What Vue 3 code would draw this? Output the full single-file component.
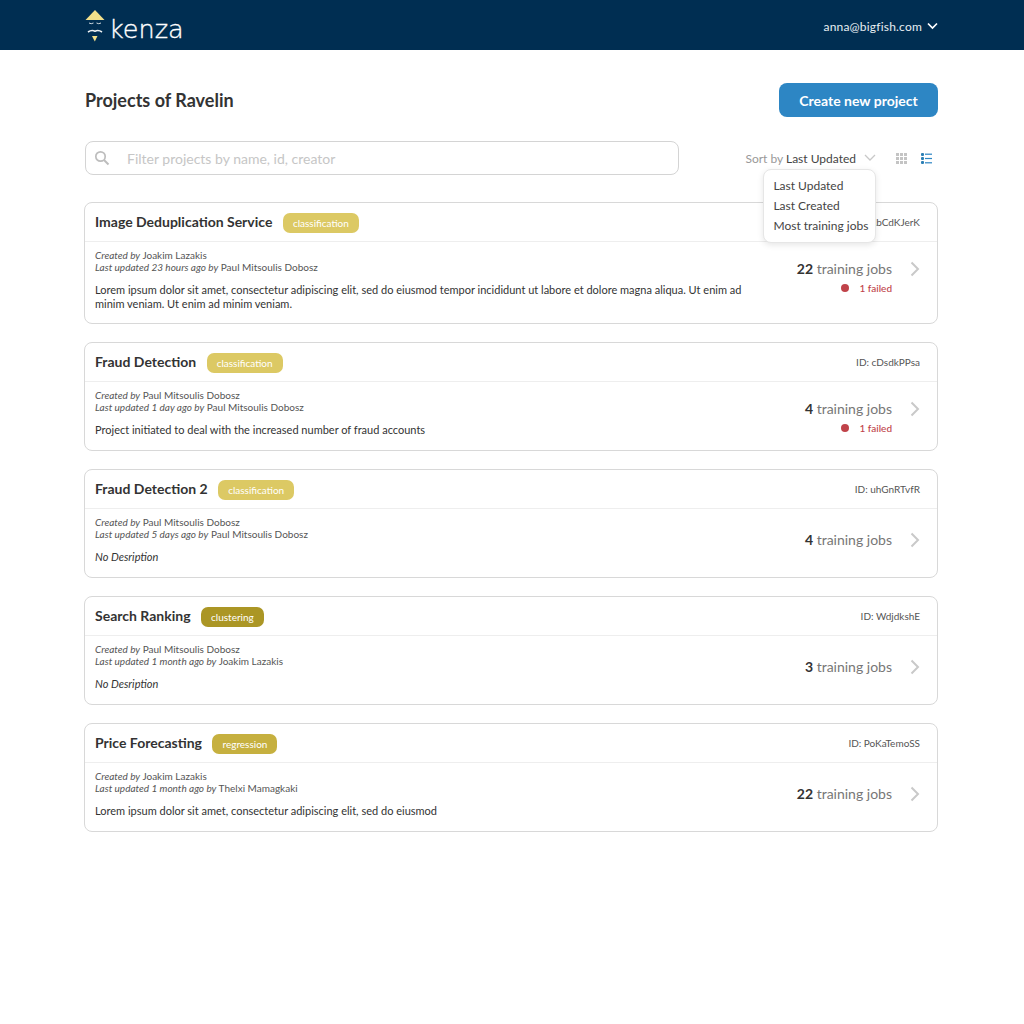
<script setup>
const projects = [
  { name: 'Image Deduplication Service', tag: 'classification', tagClass: 'classification', id: 'ID: AbCdKJerK', creator: 'Joakim Lazakis', age: '23 hours', updater: 'Paul Mitsoulis Dobosz', desc: 'Lorem ipsum dolor sit amet, consectetur adipiscing elit, sed do eiusmod tempor incididunt ut labore et dolore magna aliqua. Ut enim ad minim veniam. Ut enim ad minim veniam.', jobs: 22, failed: 1 },
  { name: 'Fraud Detection', tag: 'classification', tagClass: 'classification', id: 'ID: cDsdkPPsa', creator: 'Paul Mitsoulis Dobosz', age: '1 day', updater: 'Paul Mitsoulis Dobosz', desc: 'Project initiated to deal with the increased number of fraud accounts', jobs: 4, failed: 1 },
  { name: 'Fraud Detection 2', tag: 'classification', tagClass: 'classification', id: 'ID: uhGnRTvfR', creator: 'Paul Mitsoulis Dobosz', age: '5 days', updater: 'Paul Mitsoulis Dobosz', desc: '', jobs: 4, failed: 0 },
  { name: 'Search Ranking', tag: 'clustering', tagClass: 'clustering', id: 'ID: WdjdkshE', creator: 'Paul Mitsoulis Dobosz', age: '1 month', updater: 'Joakim Lazakis', desc: '', jobs: 3, failed: 0 },
  { name: 'Price Forecasting', tag: 'regression', tagClass: 'regression', id: 'ID: PoKaTemoSS', creator: 'Joakim Lazakis', age: '1 month', updater: 'Thelxi Mamagkaki', desc: 'Lorem ipsum dolor sit amet, consectetur adipiscing elit, sed do eiusmod', jobs: 22, failed: 0 }
]
</script>

<template>
  <div class="page">
    <header class="topbar">
      <div class="wrap topbar-inner">
        <div class="logo">
          <svg class="logo-mark" width="20" height="32" viewBox="0 0 20 32">
            <path d="M10 0 L19.5 10 H0.5 Z" fill="#f2e08a" />
            <path d="M4 13 q2.2 1.4 4.5 0 M11.5 13 q2.2 1.4 4.5 0" fill="none" stroke="#cfd9df" stroke-width="1" />
            <path d="M3 22 q3.5 -2.4 7 -0.8 q3.5 -1.6 7 0.8" fill="none" stroke="#eef2f4" stroke-width="1.6" />
            <path d="M7 26 H12.5 L9.8 31.5 Z" fill="#f2e08a" />
          </svg>
          <span class="logo-text">kenza</span>
        </div>
        <div class="account">
          <span>anna@bigfish.com</span>
          <svg width="11" height="8" viewBox="0 0 11 8"><path d="M1 1.5 L5.5 6 L10 1.5" fill="none" stroke="#fff" stroke-width="1.7" /></svg>
        </div>
      </div>
    </header>

    <main class="wrap main">
      <div class="title-row">
        <h1>Projects of Ravelin</h1>
        <button class="create">Create new project</button>
      </div>

      <div class="tools">
        <div class="search">
          <svg width="16" height="16" viewBox="0 0 16 16">
            <circle cx="6.5" cy="6.5" r="4.7" fill="none" stroke="#bdbdbd" stroke-width="1.7" />
            <path d="M10 10 L14.5 14.5" stroke="#bdbdbd" stroke-width="2" />
          </svg>
          <span>Filter projects by name, id, creator</span>
        </div>
        <div class="sort">
          <span class="sort-label">Sort by <b>Last Updated</b></span>
          <svg class="sort-chev" width="12" height="8" viewBox="0 0 12 8"><path d="M1 1 L6 6 L11 1" fill="none" stroke="#c8c8c8" stroke-width="1.3" /></svg>
          <svg class="grid-icon" width="11" height="11" viewBox="0 0 11 11" fill="#c4c4c4">
            <rect width="3" height="3" /><rect x="4" width="3" height="3" /><rect x="8" width="3" height="3" />
            <rect y="4" width="3" height="3" /><rect x="4" y="4" width="3" height="3" /><rect x="8" y="4" width="3" height="3" />
            <rect y="8" width="3" height="3" /><rect x="4" y="8" width="3" height="3" /><rect x="8" y="8" width="3" height="3" />
          </svg>
          <svg class="list-icon" width="11" height="11" viewBox="0 0 11 11">
            <g fill="#2d86c4">
              <rect x="4" y="0.6" width="7" height="1.2" /><rect x="4" y="4.9" width="7" height="1.2" /><rect x="4" y="9.2" width="7" height="1.2" />
            </g>
            <g fill="#2b7fb5">
              <rect width="3" height="3" rx="1" /><rect y="4" width="3" height="3" rx="1" /><rect y="8" width="3" height="3" rx="1" />
            </g>
          </svg>
          <div class="menu">
            <div>Last Updated</div>
            <div>Last Created</div>
            <div>Most training jobs</div>
          </div>
        </div>
      </div>

      <div class="list">
        <article v-for="p in projects" :key="p.name" class="card">
          <div class="card-head">
            <h2>{{ p.name }}</h2>
            <span class="tag" :class="p.tagClass">{{ p.tag }}</span>
            <span class="pid">{{ p.id }}</span>
          </div>
          <div class="card-body">
            <div class="info">
              <div class="meta"><i>Created by</i> {{ p.creator }}</div>
              <div class="meta"><i>Last updated {{ p.age }} ago by</i> {{ p.updater }}</div>
              <p class="desc" :class="{ none: !p.desc }">{{ p.desc || 'No Desription' }}</p>
            </div>
            <div class="jobs" :class="{ 'has-failed': p.failed }">
              <div class="count-row">
                <div class="count"><b>{{ p.jobs }}</b> training jobs</div>
                <svg width="10" height="16" viewBox="0 0 10 16"><path d="M1.5 1.5 L8 8 L1.5 14.5" fill="none" stroke="#c9c9c9" stroke-width="2" /></svg>
              </div>
              <div v-if="p.failed" class="failed"><span class="dot"></span>{{ p.failed }} failed</div>
            </div>
          </div>
        </article>
      </div>
    </main>
  </div>
</template>

<style>
body { margin: 0; background: #fff; }
</style>

<style scoped>
.page { font-family: Lato, "Open Sans", sans-serif; color: #333; min-height: 1024px; background: #fff; }
.wrap { width: 854px; margin-left: 84px; }
.topbar { height: 50px; background: #002e52; }
.topbar-inner { height: 50px; display: flex; align-items: center; justify-content: space-between; }
.logo { display: flex; align-items: flex-start; gap: 4px; height: 50px; margin-left: 1px; }
.logo-mark { margin-top: 10px; }
.logo-text { color: #fff; font: 200 25.5px/24px "DejaVu Sans", sans-serif; margin-top: 17px; -webkit-text-stroke: 0.35px #fff; }
.account { display: flex; align-items: center; gap: 5px; color: #e8eef2; font-size: 12px; letter-spacing: 0.2px; margin-top: 2px; }
.main { padding-top: 33px; }
.title-row { display: flex; align-items: center; justify-content: space-between; height: 34px; padding-left: 1px; }
h1 { margin: 0; font-size: 18px; font-weight: 700; color: #333; }
.create { width: 159px; height: 34px; border: 0; border-radius: 8px; background: #2d86c4; color: #fff; font: 700 14px Lato, sans-serif; }
.tools { display: flex; justify-content: space-between; align-items: center; margin-top: 24px; padding-left: 1px; }
.search { width: 594px; height: 34px; box-sizing: border-box; border: 1px solid #d4d4d4; border-radius: 8px; display: flex; align-items: center; gap: 17px; padding-left: 8px; color: #c6c6c6; font-size: 14px; }
.sort { position: relative; display: flex; align-items: center; padding-right: 6px; }
.sort-label { color: #999; font-size: 12px; }
.sort-label b { font-weight: 400; color: #444; }
.sort-chev { margin-left: 8px; }
.grid-icon { margin-left: 20px; }
.list-icon { margin-left: 14px; }
.menu { position: absolute; z-index: 2; top: 18px; left: 18px; width: 113px; height: 74px; box-sizing: border-box; padding: 6px 0 0 9px; background: #fff; border: 1px solid #e6e6e6; border-radius: 8px; box-shadow: 0 2px 6px rgba(0,0,0,.1); font-size: 12px; line-height: 20px; color: #444; white-space: nowrap; }
.list { display: flex; flex-direction: column; gap: 18px; margin-top: 27px; }
.card { border: 1px solid #d8d8d8; border-radius: 8px; background: #fff; }
.card-head { height: 38px; padding: 0 17px 0 10px; display: flex; align-items: center; border-bottom: 1px solid #eee; }
h2 { margin: -2px 0 0; font-size: 14px; font-weight: 700; color: #333; }
.tag { margin: 2px 0 0 10.5px; height: 20px; padding: 0 10px; border-radius: 7px; color: #fff; font-size: 10px; line-height: 20px; }
.classification { background: #dcc964; }
.clustering { background: #ab9625; }
.regression { background: #c6b03f; }
.pid { margin-left: auto; font-size: 10px; color: #555; }
.card-body { display: flex; justify-content: space-between; padding: 7px 17px 12px 10px; }
.info { width: 650px; }
.meta { font-size: 10px; line-height: 12px; color: #555; }
.desc { margin: 10px 0 0; min-height: 15px; font-size: 11px; line-height: 14px; color: #333; }
.desc.none { font-style: italic; }
.jobs { margin-top: 15px; }
.jobs.has-failed { margin-top: 11px; }
.count-row { display: flex; align-items: center; justify-content: flex-end; gap: 18px; height: 18px; }
.count { font-size: 14px; color: #777; line-height: 18px; }
.count b { color: #333; }
.failed { display: flex; justify-content: flex-end; align-items: center; font-size: 10px; color: #c0434a; line-height: 14px; margin: 3px 28px 0 0; font-weight: 500; }
.dot { width: 8px; height: 8px; border-radius: 50%; background: #c0434a; margin-right: 10px; }
</style>
